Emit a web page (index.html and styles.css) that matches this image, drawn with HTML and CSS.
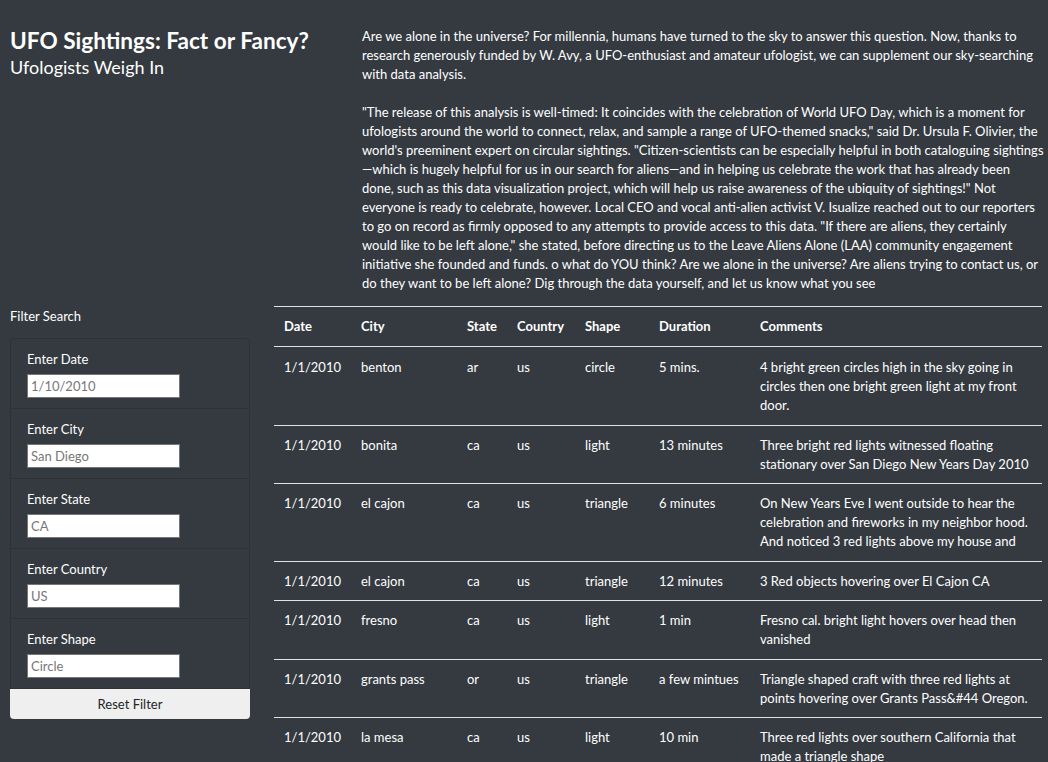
FILE: index.html
```html
<!DOCTYPE html>
<html lang="en">
<head>
<meta charset="utf-8">
<title>UFO Sightings</title>
<link rel="stylesheet" href="styles.css">
</head>
<body>
<div class="page">
  <header class="intro">
    <div class="titles">
      <h1 class="title">UFO Sightings: Fact or Fancy?</h1>
      <h2 class="subtitle">Ufologists Weigh In</h2>
    </div>
    <div class="story">
      <p>Are we alone in the universe? For millennia, humans have turned to the sky to answer this question. Now, thanks to research generously funded by W. Avy, a UFO-enthusiast and amateur ufologist, we can supplement our sky-searching with data analysis.</p>
      <p>"The release of this analysis is well-timed: It coincides with the celebration of World UFO Day, which is a moment for ufologists around the world to connect, relax, and sample a range of UFO-themed snacks," said Dr. Ursula F. Olivier, the world's preeminent expert on circular sightings. "Citizen-scientists can be especially helpful in both cataloguing sightings —which is hugely helpful for us in our search for aliens—and in helping us celebrate the work that has already been<br>done, such as this data visualization project, which will help us raise awareness of the ubiquity of sightings!" Not everyone is ready to celebrate, however. Local CEO and vocal anti-alien activist V. Isualize reached out to our reporters to go on record as firmly opposed to any attempts to provide access to this data. "If there are aliens, they certainly<br>would like to be left alone," she stated, before directing us to the Leave Aliens Alone (LAA) community engagement initiative she founded and funds. o what do YOU think? Are we alone in the universe? Are aliens trying to contact us, or do they want to be left alone? Dig through the data yourself, and let us know what you see</p>
    </div>
  </header>

  <main class="data">
    <aside class="filters">
      <div class="filters-title">Filter Search</div>
      <ul class="filter-list">
        <li class="filter-item"><label class="filter-label" for="date">Enter Date</label><input class="filter-input" id="date" type="text" placeholder="1/10/2010"></li>
        <li class="filter-item"><label class="filter-label" for="city">Enter City</label><input class="filter-input" id="city" type="text" placeholder="San Diego"></li>
        <li class="filter-item"><label class="filter-label" for="state">Enter State</label><input class="filter-input" id="state" type="text" placeholder="CA"></li>
        <li class="filter-item"><label class="filter-label" for="country">Enter Country</label><input class="filter-input" id="country" type="text" placeholder="US"></li>
        <li class="filter-item"><label class="filter-label" for="shape">Enter Shape</label><input class="filter-input" id="shape" type="text" placeholder="Circle"></li>
      </ul>
      <button class="reset-btn" type="button">Reset Filter</button>
    </aside>

    <section class="table-wrap">
      <table class="ufo-table">
        <thead>
          <tr>
            <th class="c-date">Date</th>
            <th class="c-city">City</th>
            <th class="c-state">State</th>
            <th class="c-country">Country</th>
            <th class="c-shape">Shape</th>
            <th class="c-duration">Duration</th>
            <th class="c-comments">Comments</th>
          </tr>
        </thead>
        <tbody>
          <tr><td>1/1/2010</td><td>benton</td><td>ar</td><td>us</td><td>circle</td><td>5 mins.</td><td>4 bright green circles high in the sky going in circles then one bright green light at my front door.</td></tr>
          <tr><td>1/1/2010</td><td>bonita</td><td>ca</td><td>us</td><td>light</td><td>13 minutes</td><td>Three bright red lights witnessed floating stationary over San Diego New Years Day 2010</td></tr>
          <tr><td>1/1/2010</td><td>el cajon</td><td>ca</td><td>us</td><td>triangle</td><td>6 minutes</td><td>On New Years Eve I went outside to hear the celebration and fireworks in my neighbor hood. And noticed 3 red lights above my house and</td></tr>
          <tr><td>1/1/2010</td><td>el cajon</td><td>ca</td><td>us</td><td>triangle</td><td>12 minutes</td><td>3 Red objects hovering over El Cajon CA</td></tr>
          <tr><td>1/1/2010</td><td>fresno</td><td>ca</td><td>us</td><td>light</td><td>1 min</td><td>Fresno cal. bright light hovers over head then vanished</td></tr>
          <tr><td>1/1/2010</td><td>grants pass</td><td>or</td><td>us</td><td>triangle</td><td>a few mintues</td><td>Triangle shaped craft with three red lights at points hovering over Grants Pass&amp;#44 Oregon.</td></tr>
          <tr><td>1/1/2010</td><td>la mesa</td><td>ca</td><td>us</td><td>light</td><td>10 min</td><td>Three red lights over southern California that made a triangle shape</td></tr>
        </tbody>
      </table>
    </section>
  </main>
</div>
</body>
</html>
```

FILE: styles.css
```css
html, body {
  margin: 0;
  padding: 0;
  background: #343a40;
  color: #ffffff;
  font-family: "Lato", "Liberation Sans", sans-serif;
  font-size: 13px;
  line-height: 19px;
}

.page {
  padding: 0 6px 0 10px;
}

.intro {
  display: grid;
  grid-template-columns: 352px 1fr;
  padding-top: 27px;
}

.title {
  margin: 0;
  font-size: 22.6px;
  font-weight: 700;
  line-height: 1.2;
}

.subtitle {
  margin: 3px 0 0;
  font-size: 18px;
  font-weight: 400;
  line-height: 1.2;
}

.story {
  margin-right: -6px;
}

.story p {
  margin: 0 0 19px;
}

.story p:last-child {
  margin-bottom: 13px;
}

.data {
  display: grid;
  grid-template-columns: 240px 1fr;
  column-gap: 24px;
  align-items: start;
}

.filters-title {
  padding-top: 1px;
  margin: 0 0 12px;
}

.filter-list {
  list-style: none;
  margin: 0;
  padding: 0;
  border: 1px solid rgba(0, 0, 0, 0.125);
  border-bottom: 0;
  border-radius: 4px 4px 0 0;
}

.filter-item {
  display: flex;
  flex-direction: column;
  align-items: flex-start;
  padding: 11px 16px 9px;
  height: 49px;
  border-bottom: 1px solid rgba(0, 0, 0, 0.125);
}

.filter-label {
  display: block;
  margin-bottom: 5px;
}

.filter-input {
  box-sizing: border-box;
  width: 153px;
  height: 24px;
  margin: 0;
  padding: 1px 3px;
  border: 1px solid #767676;
  border-radius: 0;
  background: #ffffff;
  font-family: inherit;
  font-size: 13px;
  color: #333;
}

.filter-input::placeholder {
  color: #777777;
}

.reset-btn {
  display: block;
  width: 240px;
  height: 30px;
  margin: 0;
  border: 0;
  border-radius: 0 0 4px 4px;
  background: #efefef;
  color: #212529;
  font-family: inherit;
  font-size: 13px;
}

.ufo-table {
  width: 100%;
  border-collapse: collapse;
  color: #ffffff;
}

.ufo-table th,
.ufo-table td {
  padding: 10px 10px 9.5px;
  text-align: left;
  vertical-align: top;
  border-top: 1px solid #dee2e6;
}

.ufo-table th {
  font-weight: 700;
  padding-bottom: 10px;
}

.ufo-table tbody tr:first-child td {
  padding-top: 11px;
}

.c-date { width: 57px; }
.c-city { width: 86px; }
.c-state { width: 30px; }
.c-country { width: 48px; }
.c-shape { width: 54px; }
.c-duration { width: 81px; }
```
